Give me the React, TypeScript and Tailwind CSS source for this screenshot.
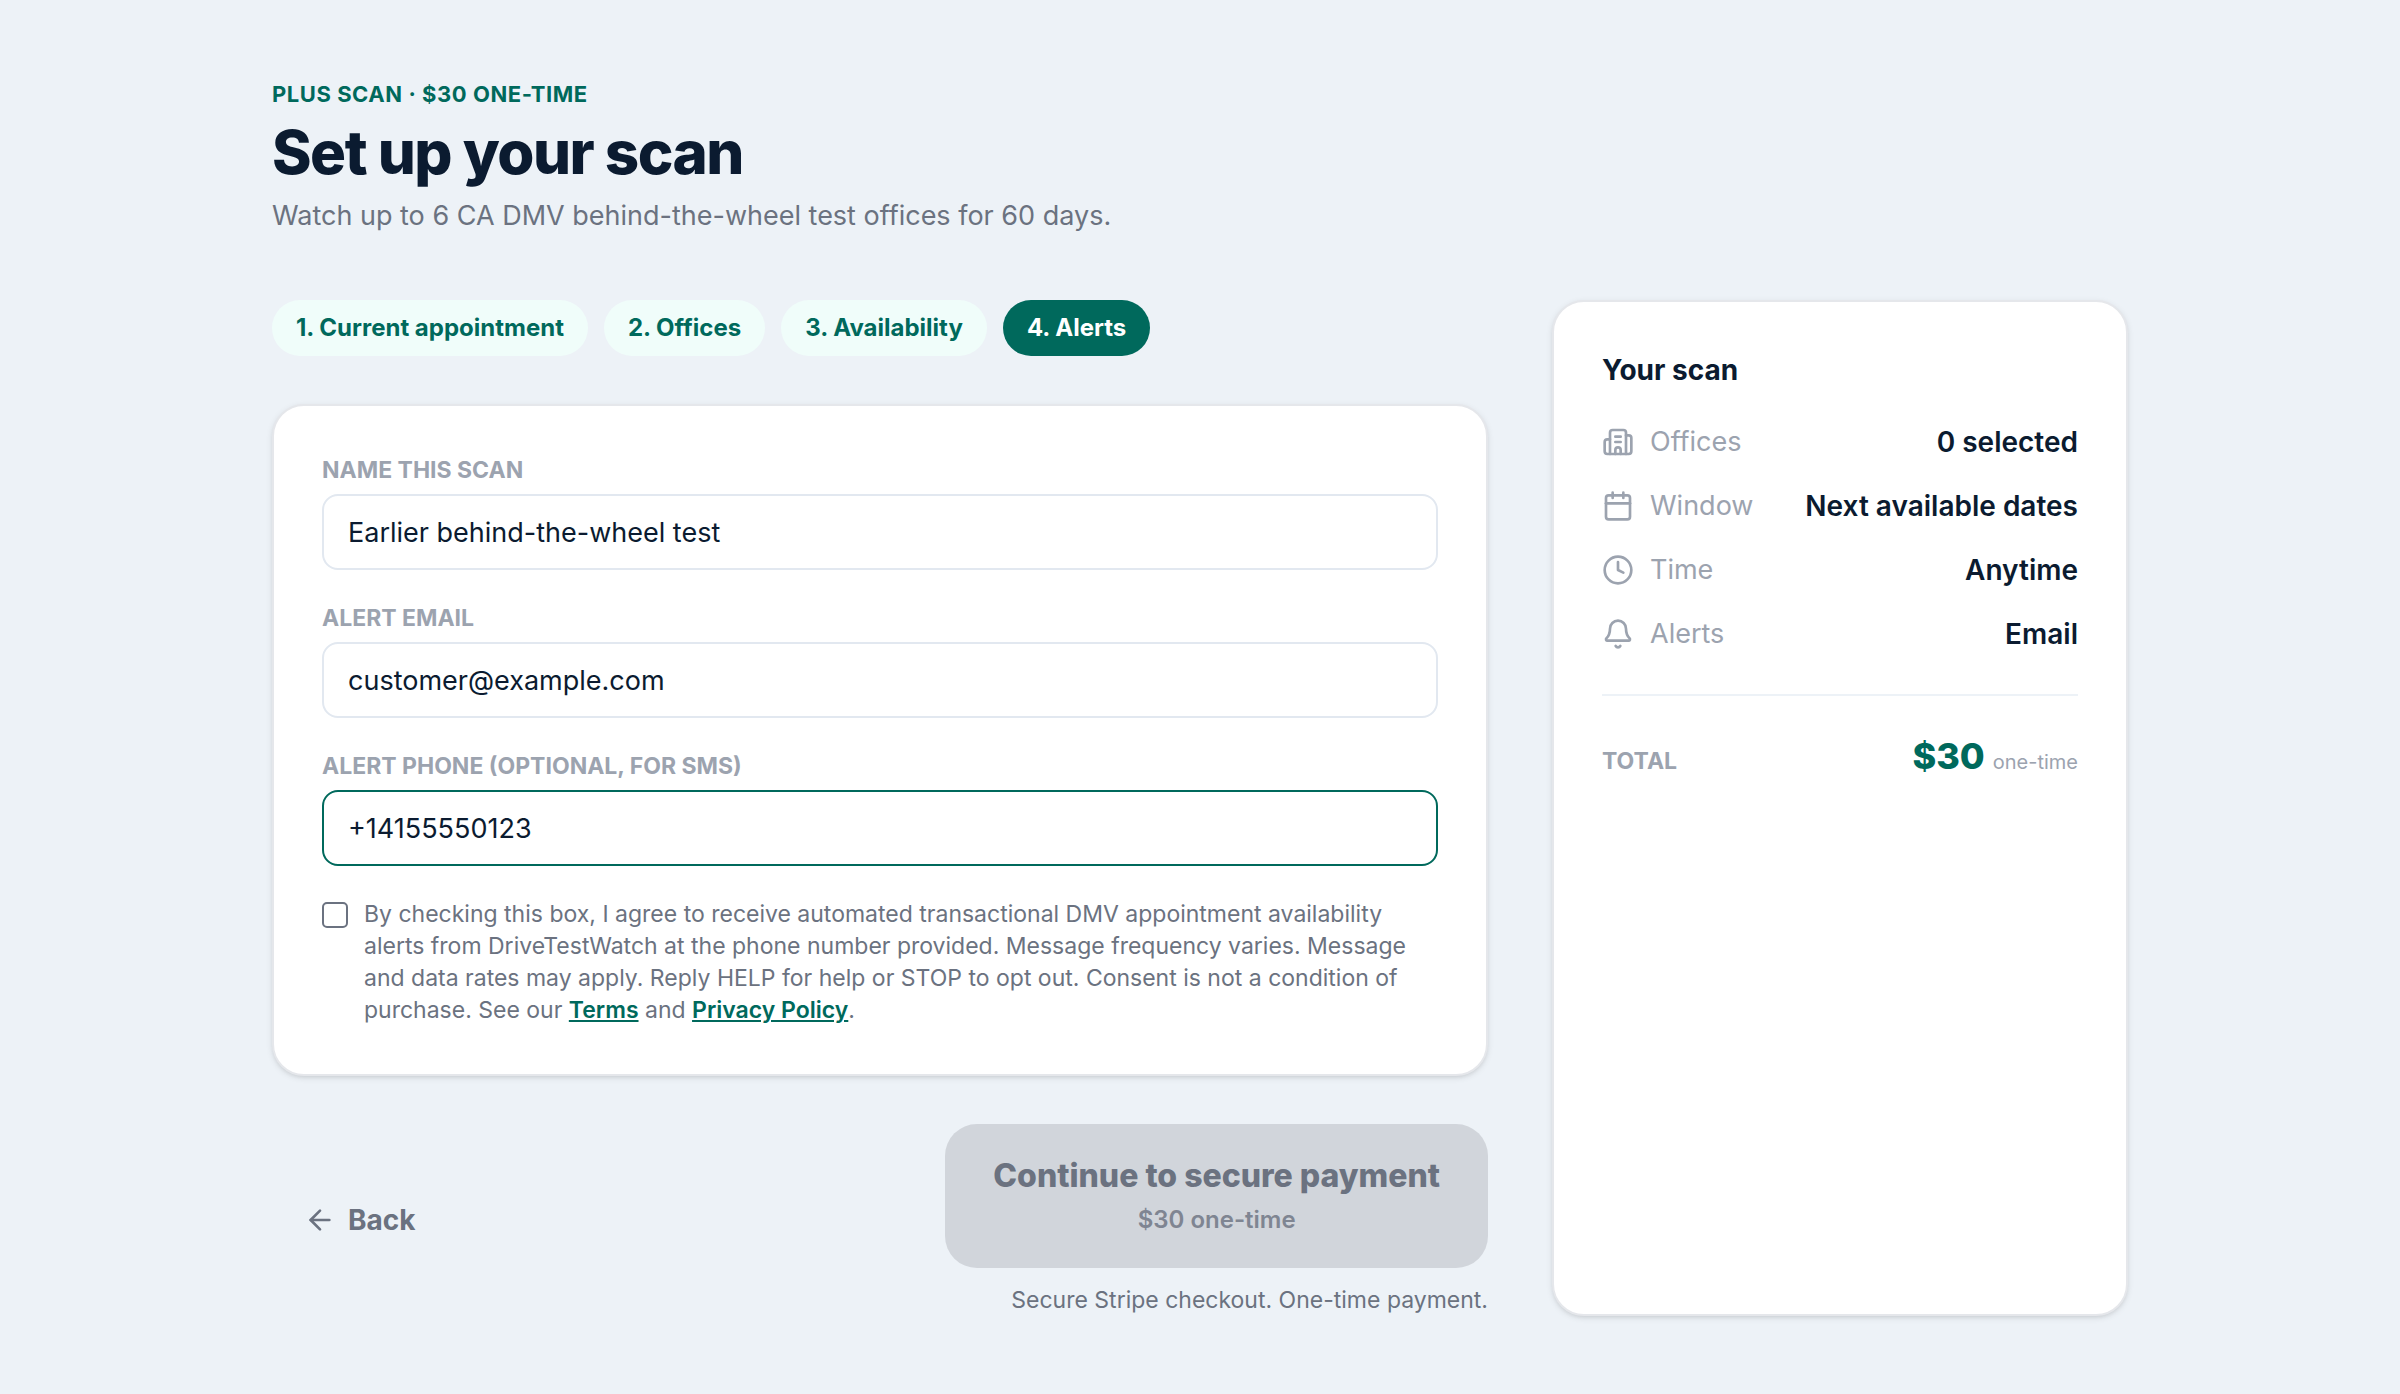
import React, { useState } from "react";
import { ArrowLeft, Bell, Building2, Calendar, Clock } from "lucide-react";

const steps = ["1. Current appointment", "2. Offices", "3. Availability", "4. Alerts"];

const summary = [
  { label: "Offices", value: "0 selected", icon: Building2 },
  { label: "Window", value: "Next available dates", icon: Calendar },
  { label: "Time", value: "Anytime", icon: Clock },
  { label: "Alerts", value: "Email", icon: Bell },
];

const Field = ({ id, label, type, value, onChange, active = false }: {
  id: string;
  label: string;
  type: string;
  value: string;
  onChange: (value: string) => void;
  active?: boolean;
}) => {
  return (
    <div>
      <label htmlFor={id} className="mb-2 block text-[23px] leading-8 font-bold uppercase text-[#9ca3af]">
        {label}
      </label>
      <input
        id={id}
        type={type}
        value={value}
        onChange={(e) => onChange(e.target.value)}
        className={`block h-[76px] w-full rounded-2xl border-2 bg-white px-6 text-[27px] text-[#0b1b30] outline-none focus:border-[#00695c] ${
          active ? "border-[#00695c]" : "border-[#e2e8f0]"
        }`}
      />
    </div>
  );
};

const App = () => {
  const [name, setName] = useState("Earlier behind-the-wheel test");
  const [email, setEmail] = useState("customer@example.com");
  const [phone, setPhone] = useState("+14155550123");
  const [consent, setConsent] = useState(false);

  return (
    <div className="min-h-screen bg-[#edf2f7] font-['Inter','Liberation_Sans',sans-serif] text-[#0b1b30]">
      <main className="mx-auto max-w-[1920px] px-8 pt-20 pb-[78px]">
        {/* Header */}
        <header className="mb-16">
          <p className="text-[22px] leading-7 font-bold tracking-wide uppercase text-[#00695c]">
            Plus scan · $30 one-time
          </p>
          <h1 className="mt-2 text-[60px] leading-[72px] font-extrabold tracking-tight">Set up your scan</h1>
          <p className="mt-2 text-[27px] leading-10 text-[#6b7280]">
            Watch up to 6 CA DMV behind-the-wheel test offices for 60 days.
          </p>
        </header>

        <div className="grid gap-16 lg:grid-cols-[minmax(0,1fr)_576px]">
          <div>
            {/* Steps */}
            <nav className="mb-12 flex flex-wrap gap-4">
              {steps.map((step, i) => (
                <button
                  key={step}
                  type="button"
                  className={`h-14 rounded-full px-6 text-2xl leading-8 font-bold ${
                    i === 3 ? "bg-[#00695c] text-white" : "bg-[#f0fdfa] text-[#00695c]"
                  }`}
                >
                  {step}
                </button>
              ))}
            </nav>

            {/* Alerts form */}
            <section className="flex flex-col gap-8 rounded-[32px] border-2 border-[#e5e7eb] bg-white p-12 shadow-[0_2px_6px_rgba(0,0,0,0.1),0_2px_4px_-2px_rgba(0,0,0,0.1)]">
              <Field id="scan-name" label="Name this scan" type="text" value={name} onChange={setName} />
              <Field id="alert-email" label="Alert email" type="email" value={email} onChange={setEmail} />
              <Field
                id="alert-phone"
                label="Alert phone (optional, for SMS)"
                type="tel"
                value={phone}
                onChange={setPhone}
                active
              />
              <div className="flex items-start gap-4">
                <input
                  id="sms-consent"
                  type="checkbox"
                  checked={consent}
                  onChange={(e) => setConsent(e.target.checked)}
                  className="mt-1 h-[26px] w-[26px] shrink-0 appearance-none rounded-[5px] border-2 border-[#6b7280] bg-white checked:bg-[#00695c]"
                />
                <label htmlFor="sms-consent" className="text-[23px] leading-8 text-[#6b7280]">
                  By checking this box, I agree to receive automated transactional DMV appointment availability
                  alerts from DriveTestWatch at the phone number provided. Message frequency varies. Message and
                  data rates may apply. Reply HELP for help or STOP to opt out. Consent is not a condition of
                  purchase. See our{" "}
                  <a href="#terms" className="font-semibold text-[#00695c] underline">Terms</a> and{" "}
                  <a href="#privacy" className="font-semibold text-[#00695c] underline">Privacy Policy</a>.
                </label>
              </div>
            </section>

            {/* Actions */}
            <div className="mt-12 flex items-center justify-between">
              <button type="button" className="flex items-center gap-3 px-8 text-[28px] leading-10 font-bold text-[#6b7280]">
                <ArrowLeft size={32} />
                Back
              </button>
              <div className="flex flex-col items-end gap-4">
                <button type="button" disabled className="rounded-[32px] bg-[#d1d5db] px-12 py-7 text-[#6b7280]">
                  <span className="block text-[32px] leading-[48px] font-extrabold">Continue to secure payment</span>
                  <span className="block text-2xl leading-10 font-semibold opacity-80">$30 one-time</span>
                </button>
                <p className="text-[23px] leading-8 text-[#6b7280]">Secure Stripe checkout. One-time payment.</p>
              </div>
            </div>
          </div>

          {/* Summary */}
          <aside className="rounded-[32px] border-2 border-[#e5e7eb] bg-white p-12 shadow-[0_2px_6px_rgba(0,0,0,0.1),0_2px_4px_-2px_rgba(0,0,0,0.1)]">
            <h2 className="text-[28px] leading-10 font-bold">Your scan</h2>
            <dl className="mt-8 flex flex-col gap-6">
              {summary.map(({ label, value, icon: Icon }) => (
                <div key={label} className="flex items-center justify-between leading-10">
                  <dt className="flex items-center gap-4 text-[27px] text-[#9ca3af]">
                    <Icon size={32} />
                    {label}
                  </dt>
                  <dd className="text-[28px] font-semibold">{value}</dd>
                </div>
              ))}
            </dl>
            <div className="mt-10 flex items-baseline justify-between border-t-2 border-[#edf2f7] pt-8">
              <span className="text-[23px] leading-8 font-bold uppercase text-[#9ca3af]">Total</span>
              <span className="flex items-baseline gap-2">
                <span className="text-4xl leading-14 font-extrabold text-[#00695c]">$30</span>
                <span className="text-[20px] leading-7 text-[#9ca3af]">one-time</span>
              </span>
            </div>
          </aside>
        </div>
      </main>
    </div>
  );
};

export default App;
